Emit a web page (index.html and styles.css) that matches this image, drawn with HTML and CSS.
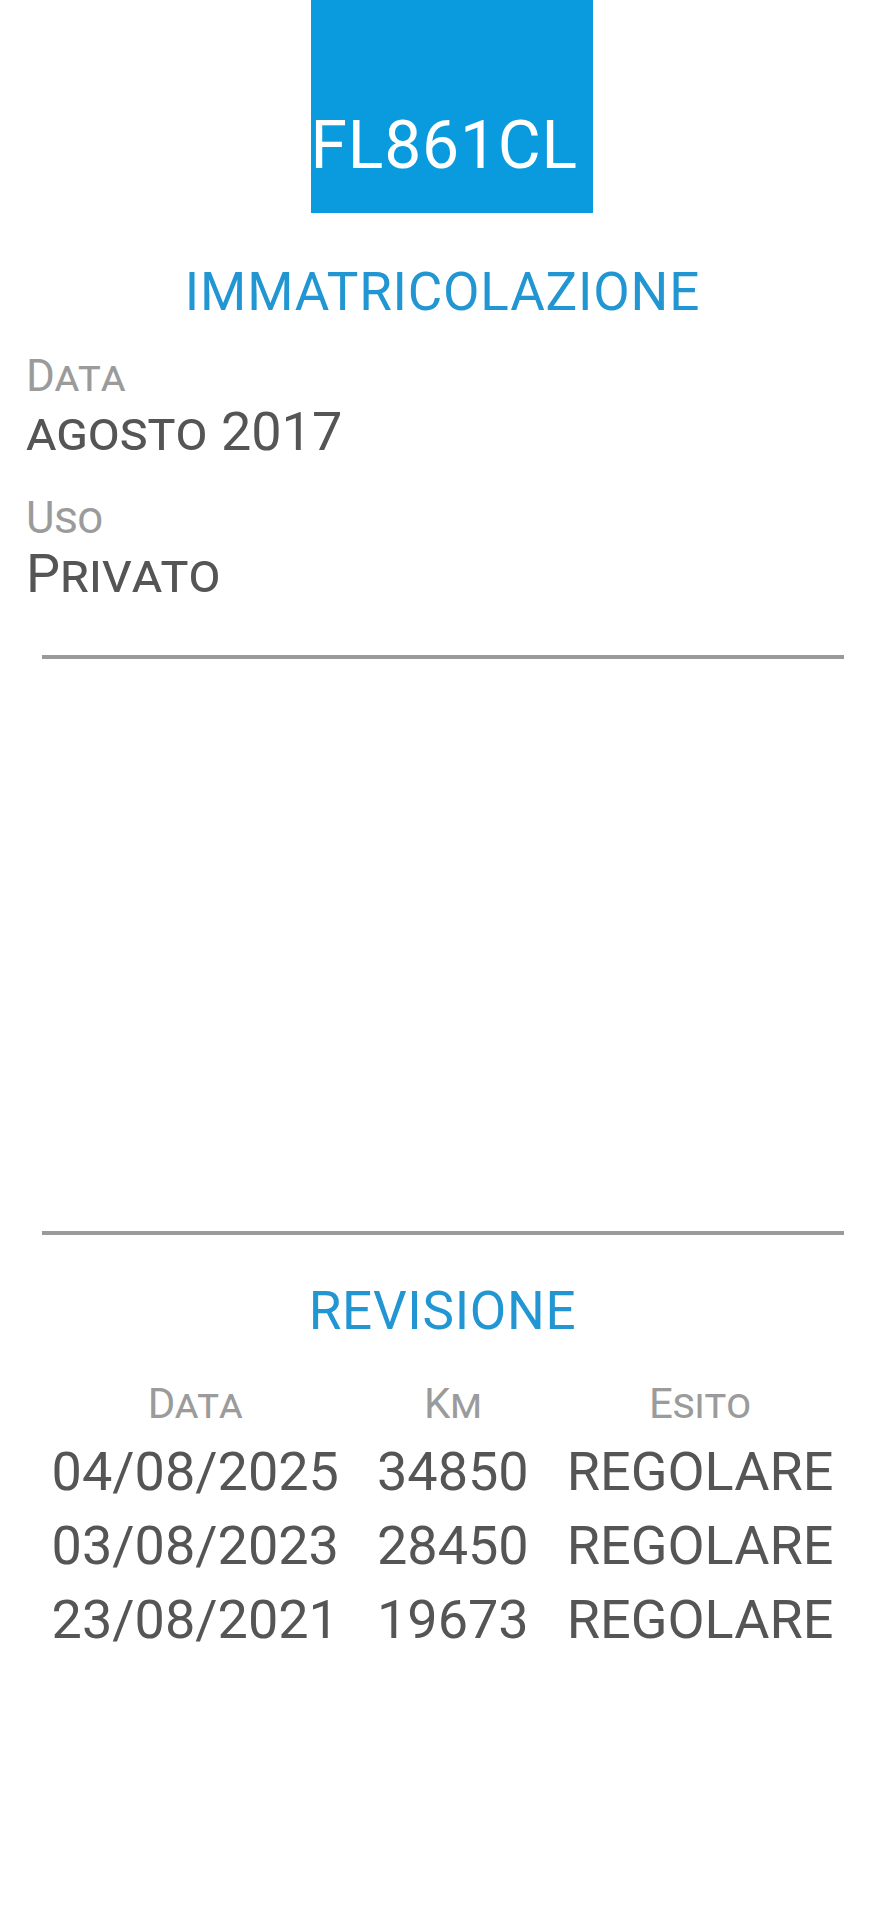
FILE: index.html
```html
<!DOCTYPE html>
<html lang="it">
<head>
    <meta charset="UTF-8">
    <meta name="viewport" content="width=device-width, initial-scale=1.0">
    <title>FL861CL</title>
    <link rel="stylesheet" href="styles.css">
</head>
<body>

    <!-- Targa -->
    <div class="plate-wrap">
        <div class="plate">FL861CL</div>
    </div>

    <!-- Immatricolazione -->
    <h2 class="section-title">IMMATRICOLAZIONE</h2>
    <div class="info">
        <div class="label">Data</div>
        <div class="value">agosto 2017</div>
        <div class="label label-next">Uso</div>
        <div class="value">Privato</div>
    </div>

    <hr class="divider">
    <div class="empty-area"></div>
    <hr class="divider">

    <!-- Revisione -->
    <h2 class="section-title revision-title">REVISIONE</h2>
    <table class="revisions">
        <thead>
            <tr>
                <th>Data</th>
                <th>Km</th>
                <th>Esito</th>
            </tr>
        </thead>
        <tbody>
            <tr>
                <td>04/08/2025</td>
                <td>34850</td>
                <td>REGOLARE</td>
            </tr>
            <tr>
                <td>03/08/2023</td>
                <td>28450</td>
                <td>REGOLARE</td>
            </tr>
            <tr>
                <td>23/08/2021</td>
                <td>19673</td>
                <td>REGOLARE</td>
            </tr>
        </tbody>
    </table>

</body>
</html>
```

FILE: styles.css
```css
body {
    font-family: 'Roboto', 'Liberation Sans', sans-serif;
    background-color: #ffffff;
    margin: 0;
    padding: 0;
    color: #555555;
}

/* Plate */
.plate-wrap {
    display: flex;
    justify-content: center;
}

.plate {
    box-sizing: border-box;
    width: 282px;
    height: 213px;
    margin-left: 18px;
    padding-top: 113px;
    background-color: #0a9ade;
    color: #ffffff;
    font-size: 66px;
    line-height: 66px;
    letter-spacing: 0.8px;
    white-space: nowrap;
}

/* Section titles */
.section-title {
    margin: 47px 0 0;
    text-align: center;
    font-size: 53px;
    font-weight: 400;
    line-height: 64px;
    letter-spacing: 0.8px;
    color: #2196d3;
}

/* Immatricolazione info */
.info {
    padding: 27px 26px 0;
}

.label {
    font-size: 44px;
    line-height: 50px;
    color: #9b9b9b;
    font-variant: small-caps;
}

.label-next {
    margin-top: 30px;
}

.value {
    font-size: 54px;
    line-height: 62px;
    color: #555555;
    font-variant: small-caps;
}

.divider {
    margin: 50px 41px 0 42px;
    border: none;
    height: 4px;
    background-color: #9a9a9a;
}

.empty-area {
    height: 572px;
}

.divider + .empty-area + .divider {
    margin-top: 0;
}

.revision-title {
    margin-top: 44px;
    letter-spacing: 0.7px;
}

/* Revisioni */
.revisions {
    margin: 33px auto 0;
    border-collapse: collapse;
}

.revisions th {
    font-size: 42px;
    line-height: 56px;
    font-weight: 400;
    color: #9b9b9b;
    font-variant: small-caps;
    padding: 0 19px 3px;
    text-align: center;
}

.revisions td {
    font-size: 54px;
    line-height: 74px;
    padding: 0 19px;
    text-align: center;
    color: #555555;
}
```
